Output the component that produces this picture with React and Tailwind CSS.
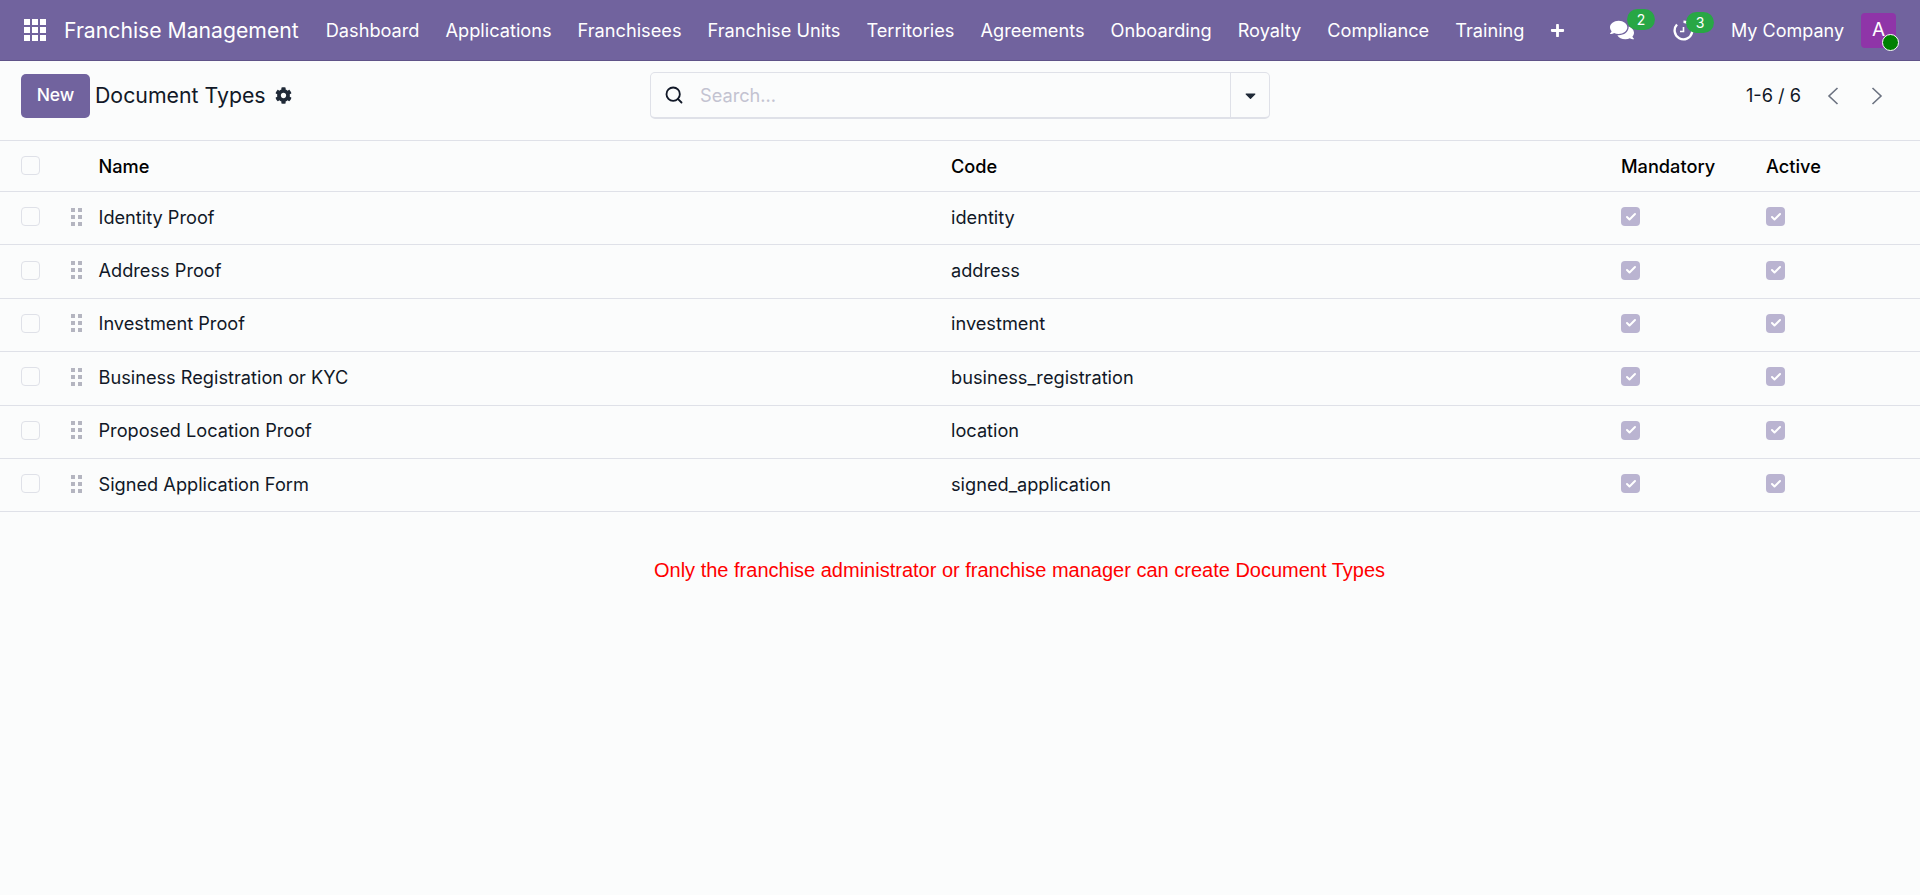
import React from 'react';
import { Search, Check } from 'lucide-react';
import { FaCog, FaCaretDown, FaPlus, FaComments } from 'react-icons/fa';

const navItems = ['Dashboard', 'Applications', 'Franchisees', 'Franchise Units', 'Territories', 'Agreements', 'Onboarding', 'Royalty', 'Compliance', 'Training'];

const rows = [
  ['Identity Proof', 'identity'],
  ['Address Proof', 'address'],
  ['Investment Proof', 'investment'],
  ['Business Registration or KYC', 'business_registration'],
  ['Proposed Location Proof', 'location'],
  ['Signed Application Form', 'signed_application'],
];

const AppsIcon = () => (
  <div className="grid grid-cols-3 gap-[2px] w-[22px] h-[22px]">
    {[...Array(9)].map((_, i) => (
      <span key={i} className="bg-white" />
    ))}
  </div>
);

const DragHandle = () => (
  <div className="grid grid-cols-2 gap-x-[3px] gap-y-[3px] w-[11px]">
    {[...Array(6)].map((_, i) => (
      <span key={i} className="w-1 h-1 bg-[#b4b5c0]" />
    ))}
  </div>
);

const EmptyBox = () => <div className="w-[19px] h-[19px] rounded-[4px] border border-[#dfe1e8] bg-[#fbfcfc]" />;

const CheckedBox = () => (
  <div className="w-[19px] h-[19px] rounded-[4px] bg-[#bab4d1] flex items-center justify-center">
    <Check size={12} strokeWidth={4} className="text-white" />
  </div>
);

const ClockIcon = () => (
  <svg width="21" height="21" viewBox="0 0 21 21" fill="none" stroke="white" strokeWidth="2.4">
    <path d="M4 4.5A8.8 8.8 0 1 0 10.5 1.7" />
    <path d="M10.5 7v4.5H7" strokeWidth="1.6" />
  </svg>
);

const Badge = ({ children, className }) => (
  <span className={`absolute flex items-center justify-center w-7 h-[21px] rounded-full bg-[#28a745] text-white text-[14px] ${className}`}>
    {children}
  </span>
);

const Chevron = ({ d }) => (
  <svg width="12" height="18" viewBox="0 0 12 18" fill="none" stroke="#6b7280" strokeWidth="1.6">
    <path d={d} />
  </svg>
);

export default function App() {
  return (
    <div className="min-h-[895px] bg-[#fbfcfc] text-[#111827] font-['Inter',sans-serif]">
      {/* Navbar */}
      <nav className="h-[61px] bg-[#71639e] border-b border-[#5f5388] flex items-center text-white">
        <div className="ml-[24px] mr-[18px]"><AppsIcon /></div>
        <span className="text-[21.2px] mr-[27px] pt-[1px] whitespace-nowrap">Franchise Management</span>
        <div className="flex gap-[26px] pt-[2px] text-[18.2px]">
          {navItems.map((item) => (
            <span key={item} className="whitespace-nowrap">{item}</span>
          ))}
        </div>
        <FaPlus size={15} className="ml-[26px]" />
        <div className="ml-auto flex items-center">
          <div className="relative mr-[39px]">
            <FaComments size={24} />
            <Badge className="left-[17px] -top-[9px]">2</Badge>
          </div>
          <div className="relative mr-[37px]">
            <ClockIcon />
            <Badge className="left-[13px] -top-[8px]">3</Badge>
          </div>
          <span className="text-[18px] mr-[17px]">My Company</span>
          <div className="relative w-[35px] h-[35px] mr-[24px] rounded-[4px] bg-[#8f35a8] flex items-center justify-center text-[19px]">
            A
            <span className="absolute -right-[3px] -bottom-[3px] w-[17px] h-[17px] rounded-full bg-[#008000] border border-white" />
          </div>
        </div>
      </nav>

      {/* Control panel */}
      <div className="h-[79px] relative flex items-center">
        <button className="ml-[21px] w-[69px] h-[44px] rounded-[5px] bg-[#71639e] text-white text-[17.5px] font-medium mb-[10px]">New</button>
        <span className="ml-[5px] text-[21.3px] mb-[10px]">Document Types</span>
        <FaCog size={17} className="ml-[9px] mb-[10px] text-[#1f2937]" />
        <div className="absolute left-[650px] top-[11px] w-[620px] h-[47px] rounded-[5px] border border-[#dfe1e8] border-b-2 flex items-center">
          <Search size={20} strokeWidth={2.2} className="ml-[13px] text-[#111827]" />
          <span className="ml-[16px] pt-[2px] text-[18.2px] text-[#c3c3d1] flex-1">Search...</span>
          <div className="w-[39px] h-full border-l border-[#dfe1e8] flex items-center justify-center">
            <FaCaretDown size={17} className="text-[#1f2937]" />
          </div>
        </div>
        <div className="ml-auto flex items-center mb-[9px]">
          <span className="text-[18.2px] mr-[26px]">1-6 / 6</span>
          <div className="mr-[32px]"><Chevron d="M10.5 1 2 9l8.5 8" /></div>
          <div className="mr-[37px]"><Chevron d="M1.5 1 10 9l-8.5 8" /></div>
        </div>
      </div>

      {/* Table */}
      <div className="border-t border-[#dfe1e8]">
        <div className="h-[51px] flex items-center border-b border-[#dfe1e8] font-medium text-[18.2px] text-black">
          <div className="w-[98.5px] pl-[21px] mb-[2px]"><EmptyBox /></div>
          <div className="w-[852.5px] pt-[1px]">Name</div>
          <div className="w-[670px] pt-[1px]">Code</div>
          <div className="w-[145px] pt-[1px]">Mandatory</div>
          <div className="pt-[1px]">Active</div>
        </div>
        {rows.map(([name, code]) => (
          <div key={code} className="h-[53.4px] flex items-center border-b border-[#dfe1e8] text-[18.2px]">
            <div className="w-[71px] pl-[21px] mb-[3px]"><EmptyBox /></div>
            <div className="w-[27.5px] mb-[3px]"><DragHandle /></div>
            <div className="w-[852.5px] mb-[2px]">{name}</div>
            <div className="w-[670px] mb-[2px]">{code}</div>
            <div className="w-[145px] mb-[3px]"><CheckedBox /></div>
            <div className="mb-[3px]"><CheckedBox /></div>
          </div>
        ))}
      </div>

      <p className="mt-[43px] ml-[654px] text-[20px] text-[#ff0000] font-['Liberation_Sans',sans-serif]">
        Only the franchise administrator or franchise manager can create Document Types
      </p>
    </div>
  );
}
